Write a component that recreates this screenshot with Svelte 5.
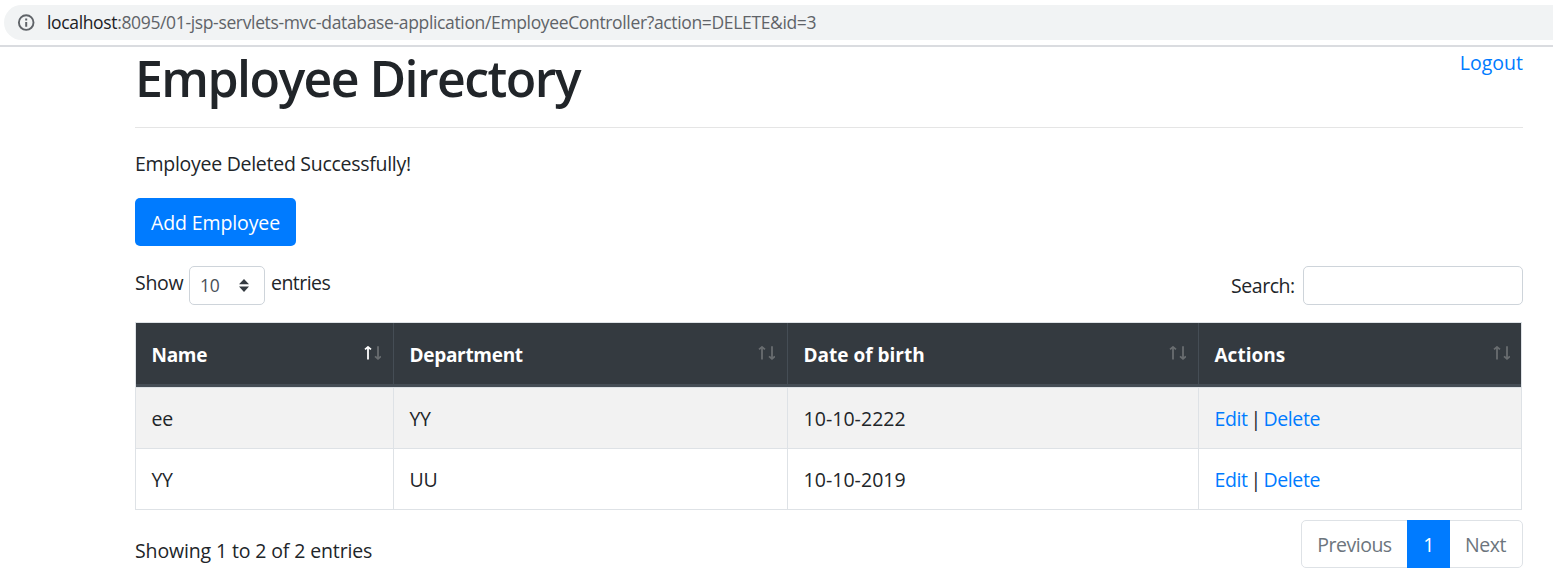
<script>
  const columns = ['Name', 'Department', 'Date of birth', 'Actions'];
  const employees = [
    { name: 'ee', department: 'YY', dob: '10-10-2222' },
    { name: 'YY', department: 'UU', dob: '10-10-2019' }
  ];
</script>

<header class="browser">
  <div class="address">
    <svg class="info" viewBox="0 0 18 18" width="18" height="18">
      <circle cx="9.2" cy="8.6" r="7.3" fill="none" stroke="#5f6368" stroke-width="1.9" />
      <path d="M8.2 8h2v4.8h-2zM8.2 4.6h2v2h-2z" fill="#5f6368" />
    </svg>
    <span class="url"><span class="host">localhost</span>:8095/01-jsp-servlets-mvc-database-application/EmployeeController?action=DELETE&amp;id=3</span>
  </div>
</header>

<main>
  <div class="top">
    <h1>Employee Directory</h1>
    <a class="logout" href="#logout">Logout</a>
  </div>
  <p class="message">Employee Deleted Successfully!</p>
  <button class="add">Add Employee</button>

  <div class="controls">
    <div class="length">
      <span class="show">Show</span>
      <div class="select">
        <span>10</span>
        <svg width="10" height="13" viewBox="0 0 10 13"><path d="M5 0L10 5.2H0zM5 13L0 7.5H10z" fill="#343a40" /></svg>
      </div>
      <span class="entries">entries</span>
    </div>
    <div class="filter">
      <span class="search">Search:</span>
      <input aria-label="Search" />
    </div>
  </div>

  <div class="table">
    <div class="row head">
      {#each columns as column, i}
        <div class="cell">
          <span class:wide={i > 1}>{column}</span>
          <svg class="sort" width="17" height="14" viewBox="0 0 17 14">
            <g fill="none" stroke-width="1.8" stroke={i === 0 ? '#ffffff' : '#696d70'}>
              <path d="M4 13.5V1" /><path d="M1 3.4L4 1L7 3.4" />
            </g>
            <g fill="none" stroke-width="1.8" stroke="#696d70">
              <path d="M14 .3V12.5" /><path d="M11 10.4L14 12.8L17 10.4" />
            </g>
          </svg>
        </div>
      {/each}
    </div>
    {#each employees as employee}
      <div class="row">
        <div class="cell">{employee.name}</div>
        <div class="cell">{employee.department}</div>
        <div class="cell dob">{employee.dob}</div>
        <div class="cell links"><a href="#edit">Edit</a><span class="bar">|</span><a href="#delete">Delete</a></div>
      </div>
    {/each}
  </div>

  <div class="footer">
    <span class="summary">Showing 1 to 2 of 2 entries</span>
    <nav>
      <span class="page prev">Previous</span>
      <span class="page active">1</span>
      <span class="page next">Next</span>
    </nav>
  </div>
</main>

<style>
  :global(body) {
    background: #fff;
    overflow: hidden;
  }
  :global(*) {
    box-sizing: border-box;
  }
  .browser {
    height: 47px;
    padding: 5px 0 0 4px;
    border-bottom: 2px solid #dadce0;
    overflow: hidden;
    font-family: 'Open Sans', 'Noto Sans', sans-serif;
  }
  .address {
    height: 35px;
    border-radius: 18px 0 0 18px;
    background: #f1f3f4;
    display: flex;
    align-items: center;
    padding-left: 13px;
  }
  .info {
    margin-right: 12px;
    flex: none;
  }
  .url {
    padding-bottom: 2px;
    font-size: 17.5px;
    letter-spacing: -0.35px;
    white-space: nowrap;
    color: #5f6368;
  }
  .host {
    color: #202124;
  }
  main {
    width: 1388px;
    margin-left: 135px;
    font-family: 'Open Sans', 'Noto Sans', sans-serif;
    font-size: 19.5px;
    line-height: 30px;
    letter-spacing: -0.28px;
    color: #212529;
  }
  a {
    color: #007bff;
    text-decoration: none;
  }
  span {
    white-space: nowrap;
  }
  .top {
    height: 81px;
    border-bottom: 1px solid #e5e5e5;
    display: flex;
    justify-content: space-between;
  }
  h1 {
    margin: 1px 0 0;
    font-size: 50px;
    line-height: 60px;
    font-weight: 600;
    letter-spacing: -1.56px;
  }
  .logout {
    margin-top: 1px;
    letter-spacing: 0;
  }
  .message {
    margin: 21px 0 19px;
  }
  .add {
    display: flex;
    align-items: center;
    justify-content: center;
    width: 161px;
    height: 48px;
    padding: 2px 0 0;
    border: 0;
    border-radius: 5px;
    background: #007bff;
    color: #fff;
    font: inherit;
    letter-spacing: -0.12px;
  }
  .controls {
    display: flex;
    justify-content: space-between;
    height: 39px;
    margin: 20px 0 17px;
  }
  .length,
  .filter {
    display: flex;
  }
  .show {
    width: 54px;
    padding-top: 2px;
  }
  .entries {
    margin-left: 6px;
    padding-top: 2px;
    letter-spacing: -0.55px;
  }
  .select {
    width: 76px;
    height: 39px;
    border: 1px solid #ced4da;
    border-radius: 5px;
    display: flex;
    align-items: center;
    justify-content: space-between;
    padding: 0 15px 0 10px;
    font-size: 17.5px;
    color: #495057;
  }
  .select span {
    padding-bottom: 1px;
  }
  .search {
    padding-top: 5px;
    width: 72px;
    letter-spacing: -0.45px;
  }
  input {
    width: 220px;
    height: 39px;
    border: 1px solid #ced4da;
    border-radius: 5px;
    background: #fff;
  }
  .table {
    width: 1387px;
    border: 1px solid #dee2e6;
    border-bottom: 0;
  }
  .row {
    display: grid;
    grid-template-columns: 258px 394px 411px 322px;
    height: 61px;
    border-bottom: 1px solid #dee2e6;
  }
  .row:nth-child(2) {
    background: #f2f2f2;
  }
  .cell {
    padding: 16px 0 0 15.5px;
    border-right: 1px solid #dee2e6;
  }
  .cell:last-child {
    border-right: 0;
  }
  .dob {
    letter-spacing: 0.05px;
  }
  .head {
    height: 65px;
    background: #343a40;
    color: #fff;
    font-size: 19px;
    font-weight: 700;
    letter-spacing: -0.3px;
  }
  .head .cell {
    display: flex;
    justify-content: space-between;
    border-bottom: 3px solid #454d55;
    border-right-color: #454d55;
    padding-top: 17px;
    padding-right: 12px;
  }
  .head .cell:last-child {
    padding-right: 11px;
  }
  .wide {
    letter-spacing: 0;
  }
  .sort {
    margin-top: 6px;
  }
  .links {
    display: flex;
    letter-spacing: -0.4px;
  }
  .bar {
    width: 16px;
    text-align: center;
  }
  .footer {
    display: flex;
    justify-content: space-between;
    padding-top: 10px;
  }
  .summary {
    padding-top: 16px;
    letter-spacing: -0.13px;
  }
  nav {
    display: flex;
    width: 222px;
    height: 48px;
    border: 1px solid #dee2e6;
    border-radius: 5px;
    color: #6c757d;
    letter-spacing: -0.5px;
  }
  .page {
    padding-top: 9px;
    text-align: center;
  }
  .prev {
    width: 105px;
  }
  .active {
    width: 43px;
    height: 48px;
    margin-top: -1px;
    padding-top: 10px;
    background: #007bff;
    color: #fff;
  }
  .next {
    width: 71px;
  }
</style>
